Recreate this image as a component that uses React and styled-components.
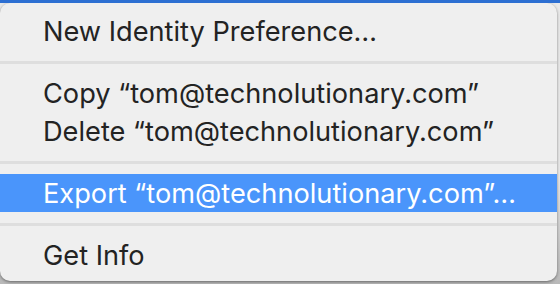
import React from 'react';
import styled, { createGlobalStyle } from 'styled-components';

const GlobalStyle = createGlobalStyle`
  html, body {
    margin: 0;
    padding: 0;
    background: #d6d6d6;
  }
  body {
    font-family: Inter, "Liberation Sans", sans-serif;
    -webkit-font-smoothing: antialiased;
  }
`;

// window behind the menu: blue title strip, light pane
const Screen = styled.div`
  width: 560px;
  height: 284px;
  box-sizing: border-box;
  border-top: 3px solid #2d6fd2;
  background: linear-gradient(180deg, #e9e9e9 0%, #e9e9e9 60%, #b9b9b9 100%);
  overflow: hidden;
`;

const Menu = styled.div`
  width: 557px;
  height: 278px;
  box-sizing: border-box;
  padding: 9px 0 7px;
  background: #efefef;
  border-radius: 10px;
  box-shadow: 0 1px 3px rgba(0, 0, 0, 0.45);
  display: flex;
  flex-direction: column;
`;

const Item = styled.div`
  height: 38px;
  display: flex;
  align-items: center;
  padding-left: 43px;
  font-size: 27.2px;
  color: ${({ $active }) => ($active ? '#ffffff' : '#232323')};
  background: ${({ $active }) => ($active ? '#4a95fb' : 'transparent')};
  white-space: nowrap;
`;

const Separator = styled.div`
  height: 24px;
  display: flex;
  align-items: center;

  &::after {
    content: '';
    flex: 1;
    height: 3px;
    background: #dedede;
  }
`;

const groups = [
  ['New Identity Preference…'],
  ['Copy “tom@technolutionary.com”', 'Delete “tom@technolutionary.com”'],
  ['Export “tom@technolutionary.com”…'],
  ['Get Info'],
];

export default function App() {
  return (
    <>
      <GlobalStyle />
      <Screen>
        <Menu>
          {groups.map((group, gi) => (
            <React.Fragment key={gi}>
              {gi > 0 && <Separator />}
              {group.map((label) => (
                <Item key={label} $active={label.startsWith('Export')}>
                  {label}
                </Item>
              ))}
            </React.Fragment>
          ))}
        </Menu>
      </Screen>
    </>
  );
}
